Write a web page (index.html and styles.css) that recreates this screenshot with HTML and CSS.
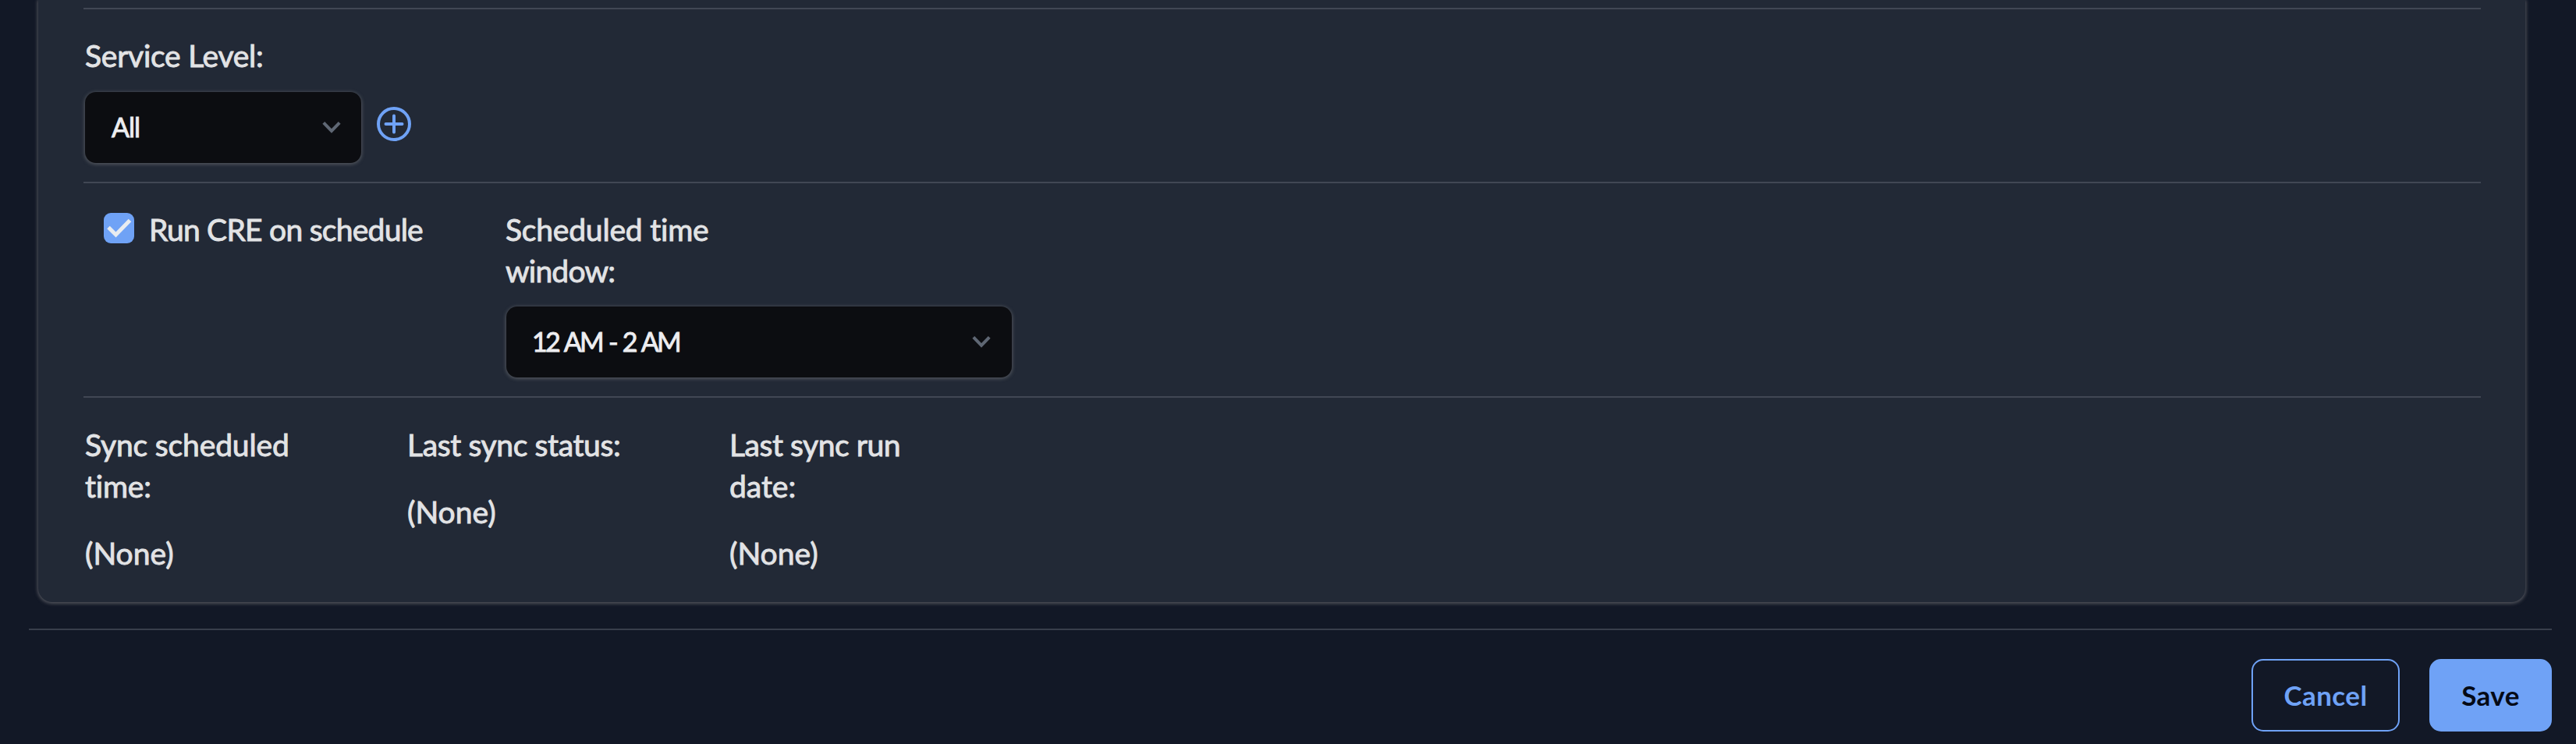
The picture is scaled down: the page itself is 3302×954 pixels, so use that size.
FILE: index.html
```html
<!DOCTYPE html>
<html lang="en">
<head>
<meta charset="utf-8">
<title>Schedule settings</title>
<link rel="stylesheet" href="styles.css">
</head>
<body>
<main class="card">
  <section class="row row-service">
    <label class="label sp-service">Service Level:</label>
    <div class="service-controls">
      <div class="select select-small"><span class="sp-all">All</span>
        <svg class="chevron" viewBox="0 0 24 16"><path d="M1.8 2.4 12 12.8 22.2 2.4"/></svg>
      </div>
      <svg class="add" viewBox="0 0 44 44"><circle cx="22" cy="22" r="20"/><path d="M22 11.5v21M11.5 22h21"/></svg>
    </div>
  </section>
  <section class="row row-schedule">
    <div class="check-group">
      <span class="checkbox"><svg viewBox="0 0 39 39"><path d="M6 18.5 15.5 28 33.5 9.5"/></svg></span>
      <span class="label sp-run">Run CRE on schedule</span>
    </div>
    <div class="window-group">
      <div class="label"><span class="sp-sched">Scheduled time</span><br><span class="sp-window">window:</span></div>
      <div class="select select-large"><span class="sp-range">12 AM - 2 AM</span>
        <svg class="chevron" viewBox="0 0 24 16"><path d="M1.8 2.4 12 12.8 22.2 2.4"/></svg>
      </div>
    </div>
  </section>
  <section class="row row-sync">
    <div class="sync-col"><div class="label"><span class="sp-sync">Sync scheduled</span><br><span class="sp-time">time:</span></div><div class="label value">(None)</div></div>
    <div class="sync-col"><div class="label sp-status">Last sync status:</div><div class="label value">(None)</div></div>
    <div class="sync-col"><div class="label"><span class="sp-last">Last sync run</span><br><span class="sp-date">date:</span></div><div class="label value">(None)</div></div>
  </section>
</main>
<footer class="footer">
  <button class="btn btn-cancel">Cancel</button>
  <button class="btn btn-save">Save</button>
</footer>
</body>
</html>
```
FILE: styles.css
```css
* { box-sizing: border-box; }
body {
  margin: 0;
  height: 954px;
  overflow: hidden;
  background: #121826;
  color: #e2e3e5;
  font-family: Lato, "Open Sans", sans-serif;
  font-size: 39px;
  line-height: 53px;
  font-variant-ligatures: none;
}
.card {
  margin: 0 65px 0 49px;
  height: 772px;
  padding: 10px 57px 0 58px;
  background: #222936;
  border-radius: 0 0 18px 18px;
  box-shadow: 0 1px 4px 1px #53555d;
}
.row { border-top: 2px solid #414754; padding-top: 33px; }
.row-service { height: 223px; }
.row-schedule { height: 275px; display: flex; }
.row-sync { height: 262px; padding-top: 34px; display: flex; }
.label { display: block; padding-left: 2px; white-space: nowrap; -webkit-text-stroke: 0.9px currentColor; }
.sp-service { letter-spacing: -0.25px; }
.sp-run { letter-spacing: -0.75px; }
.sp-sched { letter-spacing: -0.2px; }
.sp-window { letter-spacing: -0.8px; }
.sp-sync { letter-spacing: -0.15px; }
.sp-time { letter-spacing: -0.2px; }
.sp-status { letter-spacing: -0.37px; }
.sp-last { letter-spacing: -0.45px; }
.sp-all { letter-spacing: -1px; }
.sp-range { letter-spacing: -2.8px; word-spacing: 2.2px; }
.service-controls { display: flex; gap: 20px; margin: 20px 0 0 2px; }
.select {
  height: 91px;
  display: flex;
  align-items: center;
  justify-content: space-between;
  padding: 0 26px 0 34px;
  border-radius: 14px;
  background: #0c0d11;
  box-shadow: 0 1px 4px 1px #50545c;
  color: #ededf0;
  font-size: 34px;
  -webkit-text-stroke: 0.9px currentColor;
}
.select span { margin-top: -3px; }
.select-small { width: 354px; }
.window-group { margin-left: -2px; }
.select-large { width: 648px; margin: 19px 0 0 3px; padding-left: 33px; padding-right: 27px; }
.chevron { width: 24px; height: 16px; margin-top: -1px; fill: none; stroke: #5f6774; stroke-width: 4; }
.add { width: 44px; height: 44px; margin-top: 19px; fill: none; stroke: #6fa2f6; stroke-width: 4; stroke-linecap: round; }
.check-group { width: 541px; padding-left: 26px; display: flex; gap: 17px; }
.checkbox { width: 39px; height: 39px; margin-top: 5px; border-radius: 9px; background: #6fa2f6; }
.checkbox svg { display: block; width: 39px; height: 39px; fill: none; stroke: #e9ecf0; stroke-width: 5; }
.sync-col { width: 413px; }
.value { margin-top: 33px; }
.footer {
  margin: 34px 31px 0 37px;
  border-top: 2px solid #383e4b;
  padding-top: 37px;
  display: flex;
  justify-content: flex-end;
  gap: 38px;
}
.btn {
  height: 93px;
  padding: 0 0 2px;
  border: 2px solid #6fa2f6;
  border-radius: 15px;
  font: 700 35px Lato, sans-serif;
  letter-spacing: 0.4px;
}
.btn-cancel { width: 190px; background: transparent; color: #6fa2f6; }
.btn-save { width: 157px; background: #6fa2f6; color: #050a16; }
```
